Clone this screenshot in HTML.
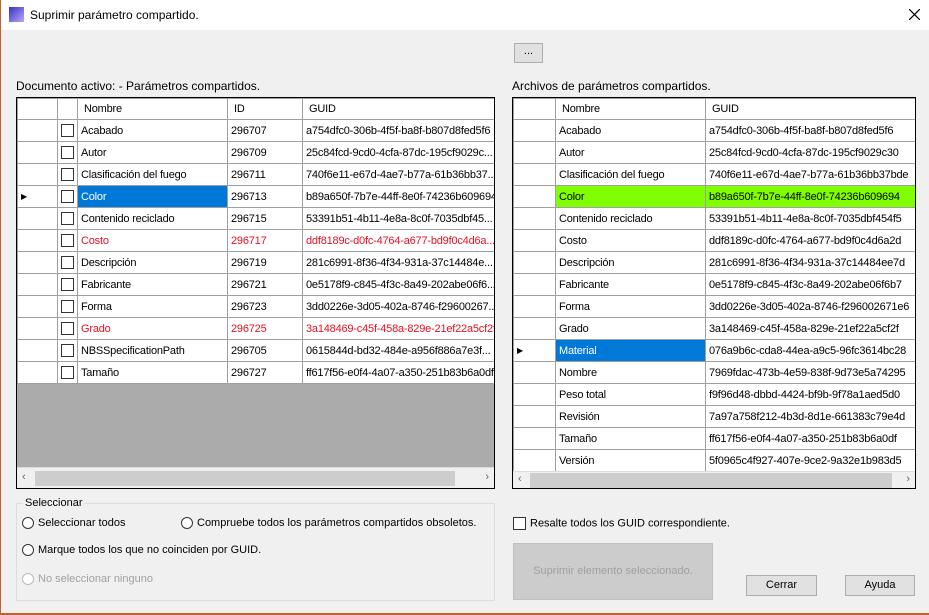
<!DOCTYPE html><html><head><meta charset="utf-8"><style>
*{margin:0;padding:0;box-sizing:border-box}
body{width:929px;height:615px;background:#f0f0f0;font-family:"Liberation Sans",sans-serif;font-size:11px;color:#000;position:relative;overflow:hidden}
.a{position:absolute}
.title{left:0;top:0;width:929px;height:30px;background:#fff}
.bl{left:0;top:0;width:1px;height:615px;background:#c5602a}
.bb{left:0;top:613px;width:929px;height:2px;background:#c5602a}
.grid{border:1px solid #000;background:#ababab;overflow:hidden}
table{border-collapse:collapse;background:#fff;table-layout:fixed}
td{border:1px solid #a0a0a0;height:22px;padding:0 3px;white-space:nowrap;overflow:hidden;font-size:11px;letter-spacing:-0.2px}
.hd td{background:#fff;padding-left:6px;height:21px}
.cb{display:inline-block;width:13px;height:13px;border:1px solid #333;background:#fff;vertical-align:middle}
.red td{color:#e81123}
.sel{background:#0078d7;color:#fff}
.grn{background:#7fff00}
.sb{background:#f0f0f0;height:17px;border-top:1px solid #ddd}
.rad{display:inline-block;width:12px;height:12px;border:1px solid #333;border-radius:50%;background:#fff;vertical-align:middle;margin-right:4px}
.btn{border:1px solid #adadad;background:#e1e1e1;text-align:center;line-height:19px}
</style></head><body>
<div class="a title"></div>
<div class="a" style="left:9px;top:7px;width:15px;height:15px;background:linear-gradient(135deg,#3a2fbf,#b4a8ff)"></div>
<div class="a" style="left:30px;top:8px;font-size:12px">Suprimir parámetro compartido.</div>
<svg class="a" style="left:909px;top:9px" width="11" height="11"><path d="M0 0L11 11M11 0L0 11" stroke="#000" stroke-width="1.2"/></svg>
<div class="a bl"></div><div class="a bb"></div>
<div class="a btn" style="left:514px;top:43px;width:29px;height:20px;line-height:14px">...</div>
<div class="a" style="left:16px;top:79px;font-size:12px">Documento activo: - Parámetros compartidos.</div>
<div class="a" style="left:512px;top:79px;font-size:12px">Archivos de parámetros compartidos.</div>

<div class="a grid" style="left:16px;top:97px;width:479px;height:392px">
<table style="width:478px">
<colgroup><col style="width:40px"><col style="width:20px"><col style="width:150px"><col style="width:75px"><col style="width:193px"></colgroup>
<tr class="hd"><td></td><td></td><td>Nombre</td><td>ID</td><td>GUID</td></tr>
<tr><td></td><td><span class="cb"></span></td><td>Acabado</td><td>296707</td><td>a754dfc0-306b-4f5f-ba8f-b807d8fed5f6</td></tr>
<tr><td></td><td><span class="cb"></span></td><td>Autor</td><td>296709</td><td>25c84fcd-9cd0-4cfa-87dc-195cf9029c...</td></tr>
<tr><td></td><td><span class="cb"></span></td><td>Clasificación del fuego</td><td>296711</td><td>740f6e11-e67d-4ae7-b77a-61b36bb37...</td></tr>
<tr><td style="font-size:8px">▶</td><td><span class="cb"></span></td><td class="sel">Color</td><td>296713</td><td>b89a650f-7b7e-44ff-8e0f-74236b609694</td></tr>
<tr><td></td><td><span class="cb"></span></td><td>Contenido reciclado</td><td>296715</td><td>53391b51-4b11-4e8a-8c0f-7035dbf45...</td></tr>
<tr class="red"><td></td><td><span class="cb"></span></td><td>Costo</td><td>296717</td><td>ddf8189c-d0fc-4764-a677-bd9f0c4d6a...</td></tr>
<tr><td></td><td><span class="cb"></span></td><td>Descripción</td><td>296719</td><td>281c6991-8f36-4f34-931a-37c14484e...</td></tr>
<tr><td></td><td><span class="cb"></span></td><td>Fabricante</td><td>296721</td><td>0e5178f9-c845-4f3c-8a49-202abe06f6...</td></tr>
<tr><td></td><td><span class="cb"></span></td><td>Forma</td><td>296723</td><td>3dd0226e-3d05-402a-8746-f29600267...</td></tr>
<tr class="red"><td></td><td><span class="cb"></span></td><td>Grado</td><td>296725</td><td>3a148469-c45f-458a-829e-21ef22a5cf2f</td></tr>
<tr><td></td><td><span class="cb"></span></td><td>NBSSpecificationPath</td><td>296705</td><td>0615844d-bd32-484e-a956f886a7e3f...</td></tr>
<tr><td></td><td><span class="cb"></span></td><td>Tamaño</td><td>296727</td><td>ff617f56-e0f4-4a07-a350-251b83b6a0df</td></tr>
</table>
<div class="a sb" style="left:0;top:369px;width:477px;height:21px"><div class="a" style="left:18px;top:3px;width:420px;height:15px;background:#cdcdcd"></div><span class="a" style="left:5px;top:3px;color:#666">‹</span><span class="a" style="right:5px;top:3px;color:#666">›</span></div>
</div>

<div class="a grid" style="left:512px;top:97px;width:404px;height:392px;background:#fff">
<table style="width:402px">
<colgroup><col style="width:42px"><col style="width:150px"><col style="width:210px"></colgroup>
<tr class="hd"><td></td><td>Nombre</td><td>GUID</td></tr>
<tr><td></td><td>Acabado</td><td>a754dfc0-306b-4f5f-ba8f-b807d8fed5f6</td></tr>
<tr><td></td><td>Autor</td><td>25c84fcd-9cd0-4cfa-87dc-195cf9029c30</td></tr>
<tr><td></td><td>Clasificación del fuego</td><td>740f6e11-e67d-4ae7-b77a-61b36bb37bde</td></tr>
<tr><td></td><td class="grn">Color</td><td class="grn">b89a650f-7b7e-44ff-8e0f-74236b609694</td></tr>
<tr><td></td><td>Contenido reciclado</td><td>53391b51-4b11-4e8a-8c0f-7035dbf454f5</td></tr>
<tr><td></td><td>Costo</td><td>ddf8189c-d0fc-4764-a677-bd9f0c4d6a2d</td></tr>
<tr><td></td><td>Descripción</td><td>281c6991-8f36-4f34-931a-37c14484ee7d</td></tr>
<tr><td></td><td>Fabricante</td><td>0e5178f9-c845-4f3c-8a49-202abe06f6b7</td></tr>
<tr><td></td><td>Forma</td><td>3dd0226e-3d05-402a-8746-f296002671e6</td></tr>
<tr><td></td><td>Grado</td><td>3a148469-c45f-458a-829e-21ef22a5cf2f</td></tr>
<tr><td style="font-size:8px">▶</td><td class="sel">Material</td><td>076a9b6c-cda8-44ea-a9c5-96fc3614bc28</td></tr>
<tr><td></td><td>Nombre</td><td>7969fdac-473b-4e59-838f-9d73e5a74295</td></tr>
<tr><td></td><td>Peso total</td><td>f9f96d48-dbbd-4424-bf9b-9f78a1aed5d0</td></tr>
<tr><td></td><td>Revisión</td><td>7a97a758f212-4b3d-8d1e-661383c79e4d</td></tr>
<tr><td></td><td>Tamaño</td><td>ff617f56-e0f4-4a07-a350-251b83b6a0df</td></tr>
<tr><td></td><td>Versión</td><td>5f0965c4f927-407e-9ce2-9a32e1b983d5</td></tr>
</table>
<div class="a sb" style="left:0;top:373px;width:402px;height:17px"><div class="a" style="left:17px;top:1px;width:362px;height:15px;background:#cdcdcd"></div><span class="a" style="left:5px;top:1px;color:#666">‹</span><span class="a" style="right:5px;top:1px;color:#666">›</span></div>
</div>

<div class="a" style="left:16px;top:503px;width:479px;height:98px;border:1px solid #dcdcdc"></div>
<div class="a" style="left:23px;top:497px;background:#f0f0f0;padding:0 2px">Seleccionar</div>
<div class="a" style="left:22px;top:517px"><span class="rad"></span>Seleccionar todos</div>
<div class="a" style="left:181px;top:517px"><span class="rad"></span>Compruebe todos los parámetros compartidos obsoletos.</div>
<div class="a" style="left:22px;top:544px"><span class="rad"></span>Marque todos los que no coinciden por GUID.</div>
<div class="a" style="left:22px;top:573px;color:#a0a0a0"><span class="rad" style="border-color:#bbb"></span>No seleccionar ninguno</div>
<div class="a" style="left:513px;top:517px"><span class="cb" style="margin-right:4px"></span>Resalte todos los GUID correspondiente.</div>
<div class="a" style="left:513px;top:543px;width:200px;height:57px;background:#cccccc;border:1px solid #bfbfbf;color:#a0a0a0;text-align:center;line-height:55px">Suprimir elemento seleccionado.</div>
<div class="a btn" style="left:746px;top:575px;width:71px;height:21px">Cerrar</div>
<div class="a btn" style="left:845px;top:575px;width:70px;height:21px">Ayuda</div>
</body></html>
